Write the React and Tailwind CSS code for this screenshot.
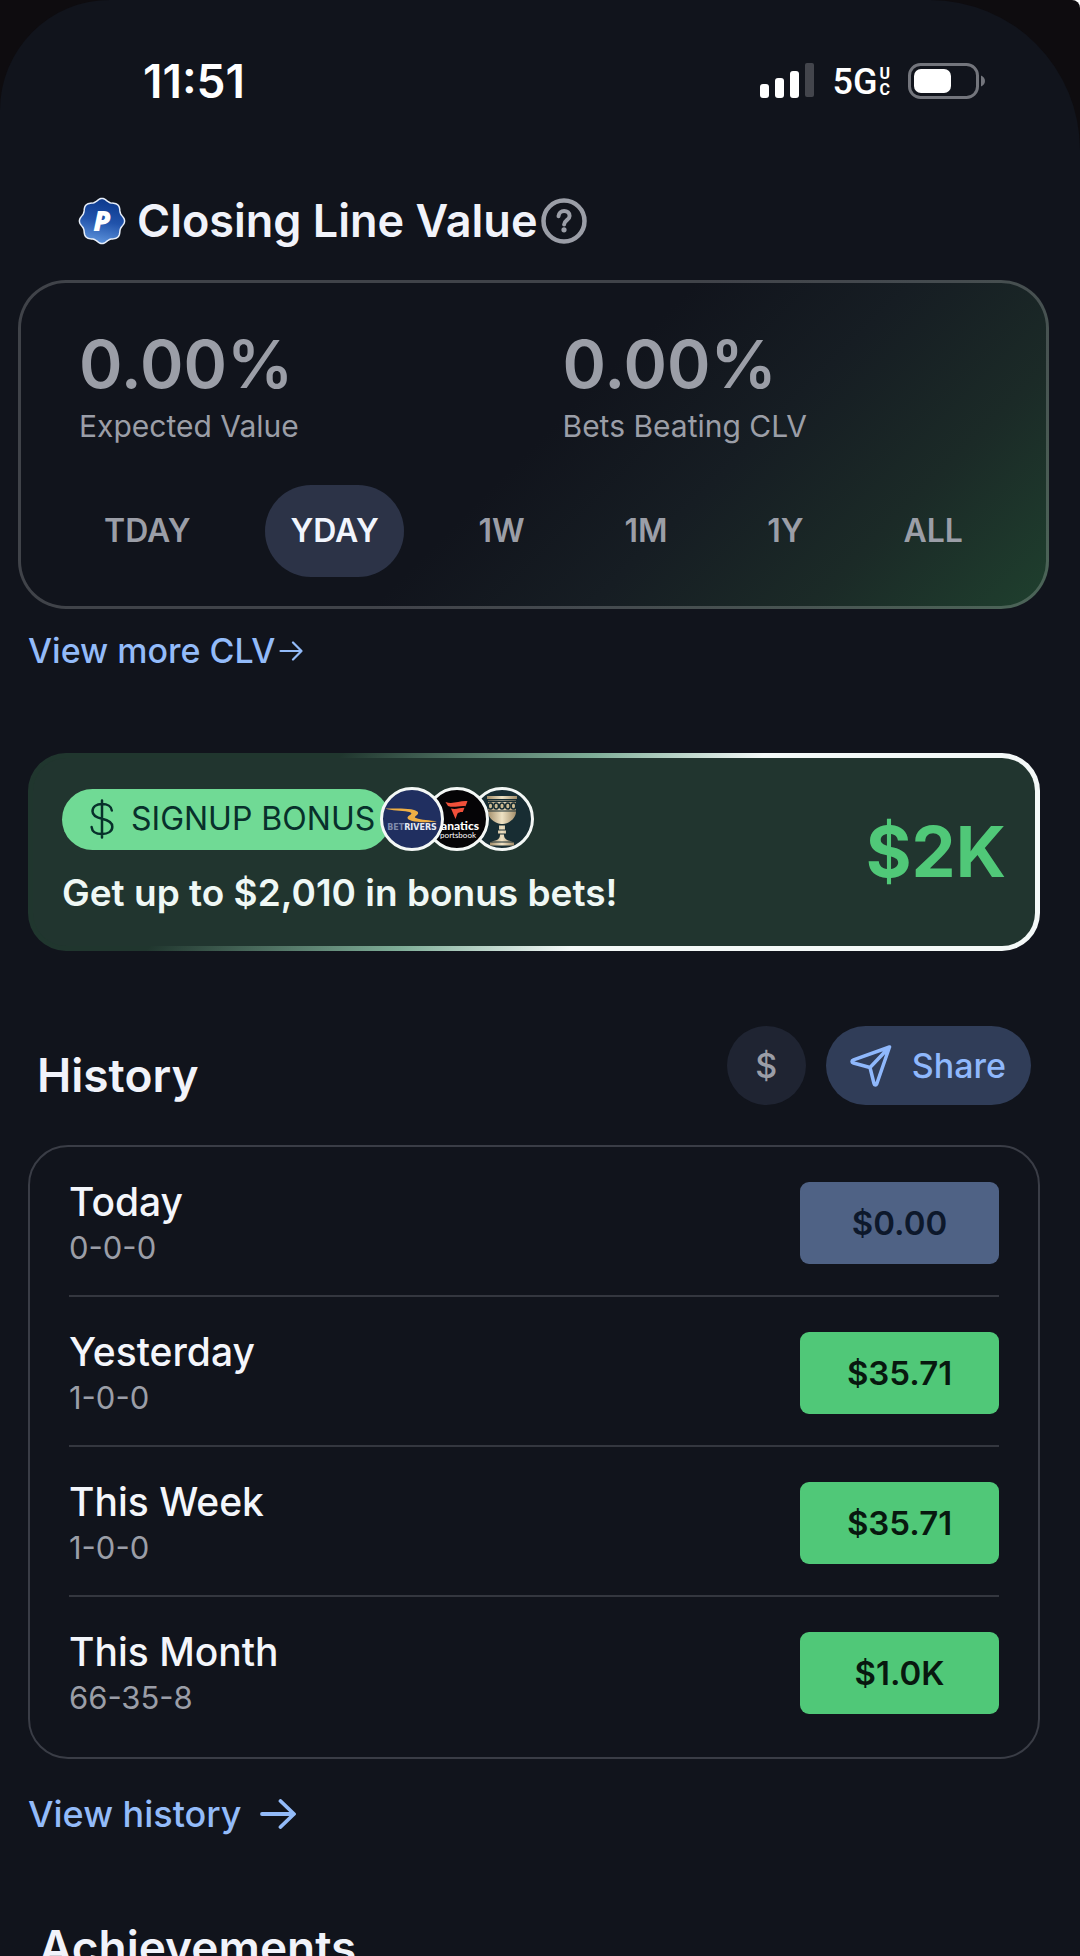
import React from "react";

const PERIODS = ["TDAY", "YDAY", "1W", "1M", "1Y", "ALL"];

const HISTORY = [
  { name: "Today", record: "0-0-0", amount: "$0.00", flat: true },
  { name: "Yesterday", record: "1-0-0", amount: "$35.71" },
  { name: "This Week", record: "1-0-0", amount: "$35.71" },
  { name: "This Month", record: "66-35-8", amount: "$1.0K" },
];

// Outline of the scalloped badge: a circle whose radius swells eight times.
const SCALLOP =
  Array.from({ length: 120 }, (_, i) => {
    const a = (i / 120) * Math.PI * 2;
    const r = 21.3 + 1.3 * Math.cos(8 * a);
    return `${i ? "L" : "M"}${(24 + r * Math.cos(a)).toFixed(2)} ${(24 + r * Math.sin(a)).toFixed(2)}`;
  }).join("") + "Z";

function StatusBar() {
  return (
    <header className="flex items-center justify-between pt-[57px] pr-[94px] pl-[143px] text-white">
      <time className="text-[46px] leading-[48px] font-semibold">11:51</time>
      <div className="flex items-center">
        <svg className="h-9 w-[54px]" viewBox="0 0 54 36" aria-label="Signal" role="img">
          <rect x="0" y="21" width="9" height="14" rx="3" fill="#fff" />
          <rect x="15" y="15" width="9" height="20" rx="3" fill="#fff" />
          <rect x="30" y="8" width="9" height="27" rx="3" fill="#fff" />
          <rect x="45" y="0" width="9" height="34" rx="2" fill="#43454c" />
        </svg>
        <span className="ml-[18px] pt-[2px] font-[Roboto] text-[36px] leading-10 font-medium">5G</span>
        <span className="ml-[2px] flex flex-col pt-[2px] font-[Roboto] text-[16px] leading-4 font-bold">
          <span>U</span>
          <span>C</span>
        </span>
        <svg className="ml-[18px] h-9 w-[78px]" viewBox="0 0 78 36" aria-label="Battery" role="img">
          <rect x="1.500" y="1.500" width="68" height="33" rx="11" fill="none" stroke="#73757c" strokeWidth="3" />
          <rect x="6" y="6" width="37" height="24" rx="7" fill="#fff" />
          <path d="M73 12.500c2.500 1 4 3 4 5.500s-1.500 4.500-4 5.500z" fill="#73757c" />
        </svg>
      </div>
    </header>
  );
}

function ClvBadge() {
  return (
    <svg className="size-12 shrink-0" viewBox="0 0 48 48" aria-hidden="true">
      <defs>
        <linearGradient id="badge" x1="0.6" y1="0" x2="0.4" y2="1">
          <stop offset="0" stopColor="#0b388c" />
          <stop offset="0.5" stopColor="#2153ab" />
          <stop offset="1" stopColor="#5f95dd" />
        </linearGradient>
      </defs>
      <path d={SCALLOP} fill="url(#badge)" stroke="#e8effa" strokeWidth="1.500" />
      <text x="24" y="34" textAnchor="middle" fill="#fff" fontFamily="Open Sans, sans-serif" fontSize="28" fontWeight="800" fontStyle="italic">
        P
      </text>
    </svg>
  );
}

function Stat({ value, label }) {
  return (
    <div className="flex-1">
      <div className="text-[66px] leading-[72px] font-semibold">{value}</div>
      <div className="mt-[6px] text-[30px] leading-10">{label}</div>
    </div>
  );
}

function ClvCard() {
  return (
    <section className="mr-[31px] ml-[18px] rounded-[48px] border-[3px] border-white/20 bg-[linear-gradient(135deg,#11141c_50%,#161d23_66%,#1b2a27_82%,#1f402e_100%)] bg-origin-border px-[58px] pt-[45px] pb-[29px] text-[#9b9ea7]">
      <div className="-mr-[58px] flex">
        <Stat value="0.00%" label="Expected Value" />
        <Stat value="0.00%" label="Bets Beating CLV" />
      </div>
      <div className="mt-[39px] flex justify-between">
        {PERIODS.map((p) => (
          <button
            key={p}
            type="button"
            aria-pressed={p === "YDAY"}
            className={
              "h-[92px] rounded-[46px] px-[25px] text-[32px] leading-10 font-semibold " +
              (p === "YDAY" ? "bg-[#2c3347] text-[#f1f5fd]" : "")
            }
          >
            {p}
          </button>
        ))}
      </div>
    </section>
  );
}

function DollarIcon() {
  return (
    <svg className="h-10 w-6" viewBox="0 0 24 40" fill="none" stroke="#08302b" strokeWidth="2.500" strokeLinecap="round" aria-hidden="true">
      <path d="M12 1.500v37M21.800 11.500C21.500 7.500 17.500 5 12 5S2.500 7.800 2.500 12.300C2.500 17 6.500 18.600 12 19.800s10.300 3 10.300 7.900c0 4.600-4.300 7.300-10.300 7.300S2 32.500 1.600 28" />
    </svg>
  );
}

function BetRivers() {
  return (
    <svg className="relative z-20 size-16" viewBox="0 0 64 64" role="img" aria-label="BetRivers">
      <circle cx="32" cy="32" r="30.500" fill="#202f60" stroke="#f4f8f6" strokeWidth="3" />
      <path d="M5 21.500c10 0 19-.5 26 .8 6 1.200 9 3.200 6 5.600-2 1.600-3 2.300-1 3.100 5 2 14 2.200 21 3.500-9 1-19 1-25.500-.8-5-1.500-5-3.600-1.500-5.700 2.500-1.600 1.500-2.700-2-3.300-7-1.300-16-1-23-3.200z" fill="#efaf45" />
      <text x="32" y="43" textAnchor="middle" fontFamily="DejaVu Sans, sans-serif" fontSize="8" fontWeight="700">
        <tspan fill="#7f8aac">BET</tspan>
        <tspan fill="#e6eaf4">RIVERS</tspan>
      </text>
    </svg>
  );
}

function Fanatics() {
  return (
    <svg className="relative z-10 -ml-[19px] size-16" viewBox="0 0 64 64" role="img" aria-label="Fanatics Sportsbook">
      <circle cx="32" cy="32" r="30.500" fill="#050406" stroke="#f4f8f6" strokeWidth="3" />
      <path d="M20.500 15c7 3 14-1.500 22-.8l-2 5c-6-.8-12 2-17.500-.2zM26 21.500c5 1.500 9-1 13.500-.7l-1.700 4.300c-2.300-.2-4 .4-5.300 1.300L30.500 32z" fill="#f0503a" />
      <text x="54" y="43" textAnchor="end" fontFamily="Lato, sans-serif" fontSize="12" fontWeight="900" fill="#fff">anatics</text>
      <text x="51" y="51" textAnchor="end" fontFamily="Lato, sans-serif" fontSize="8" fill="#fff">portsbook</text>
    </svg>
  );
}

function Trophy() {
  return (
    <svg className="-ml-[19px] size-16" viewBox="0 0 64 64" aria-hidden="true">
      <defs>
        <linearGradient id="cup" x1="0" x2="1">
          <stop offset="0" stopColor="#a08a66" />
          <stop offset="0.5" stopColor="#efe2c4" />
          <stop offset="1" stopColor="#a08a66" />
        </linearGradient>
      </defs>
      <circle cx="32" cy="32" r="30.500" fill="#182d33" stroke="#f4f8f6" strokeWidth="3" />
      <g fill="url(#cup)">
        <path d="M17 9h30v3H17zM18 13.500h28v11C46 31 40 36 33 37h-2c-7-1-13-6-13-12.500z" />
        <path d="M29 38.500h6v4h-6zM28 43.500h8v3h-8zM30 47.500h4c0 4 2 6 9 7H21c7-1 9-3 9-7zM20 55.500h24v3H20z" />
      </g>
      <g fill="#cdbb93" stroke="#182d33" strokeWidth="1.500">
        {[20.500, 26.200, 32, 37.800, 43.500].map((x) => (
          <ellipse key={x} cx={x} cy="19" rx="2.300" ry="3" />
        ))}
      </g>
      <path d="M17 14.500h30M18 24h28" stroke="#182d33" strokeWidth="1" />
    </svg>
  );
}

function BonusBanner() {
  return (
    <a
      href="#bonus"
      className="mt-20 mr-10 ml-7 block rounded-[38px] bg-[linear-gradient(135deg,#20362e_26%,#7fae98_47%,#f4f9f8_61%)] p-[5px]"
    >
      <div className="flex items-center justify-between rounded-[33px] bg-[#21352f] pt-[29px] pr-[29px] pb-[29px] pl-[29px]">
        <div>
          <div className="flex h-16 items-center">
            <span className="flex h-[61px] items-center gap-[17px] rounded-full bg-[#70da95] pr-[15px] pl-7 text-[32px] leading-10 text-[#08302b]">
              <DollarIcon />
              SIGNUP BONUS
            </span>
            <span className="-ml-[10px] flex">
              <BetRivers />
              <Fanatics />
              <Trophy />
            </span>
          </div>
          <p className="mt-[18px] text-[37px] leading-[48px] font-semibold text-[#eff8f5]">Get up to $2,010 in bonus bets!</p>
        </div>
        <strong className="text-[70px] leading-[72px] font-bold text-[#50c878]">$2K</strong>
      </div>
    </a>
  );
}

function PaperPlane() {
  return (
    <svg className="size-[42px]" viewBox="0 0 42 42" fill="none" stroke="currentColor" strokeWidth="3.500" strokeLinejoin="round" strokeLinecap="round" aria-hidden="true">
      <path d="M39.500 2 3.500 14.800c-2 .7-2 2.500 0 3.200L20 22.500l4 16c.5 2 2 2 2.800.2zL20 22.500" />
    </svg>
  );
}

function History() {
  return (
    <section className="mr-10 ml-7">
      <div className="mt-[75px] flex items-end justify-between pr-[9px] pl-[9px]">
        <h2 className="text-[46px] leading-[60px] font-semibold text-[#f1f3fa]">History</h2>
        <div className="flex gap-5">
          <button type="button" aria-label="Show dollars" className="size-[79px] rounded-full bg-[#1f2432] text-[34px] leading-10 font-medium text-[#9b9ea7]">
            $
          </button>
          <button type="button" className="flex h-[79px] items-center gap-5 rounded-full bg-[#303d58] pr-[25px] pl-6 text-[34px] leading-10 font-medium text-[#8fb8fc]">
            <PaperPlane />
            Share
          </button>
        </div>
      </div>
      <ul className="mt-10 rounded-[40px] border-2 border-[#3a3d46] px-[39px] pb-3">
        {HISTORY.map((h) => (
          <li key={h.name} className="flex items-center justify-between border-b-2 border-[#34373f] pt-[30px] pb-[27px] last:border-b-0">
            <div>
              <div className="text-[39px] leading-[50px] font-medium text-[#f4f6fb]">{h.name}</div>
              <div className="text-[31px] leading-[41px] text-[#9b9ea7]">{h.record}</div>
            </div>
            <span
              className={
                "w-[199px] rounded-[9px] text-center text-[33px] leading-[82px] font-semibold " +
                (h.flat ? "bg-[#4f6285] text-[#0d182b]" : "bg-[#50c878] text-[#08180f]")
              }
            >
              {h.amount}
            </span>
          </li>
        ))}
      </ul>
    </section>
  );
}

export default function App() {
  return (
    <div className="h-screen overflow-hidden bg-white font-[Inter,sans-serif]">
      <div className="h-full rounded-tr-[8px] bg-[#0e0c0f]">
        <main className="h-full overflow-hidden rounded-tl-[110px] rounded-tr-[150px] bg-[#11141c]">
          <StatusBar />
          <div className="mt-[88px] mb-[31px] flex items-center pl-[78px]">
            <ClvBadge />
            <h1 className="ml-[11px] text-[45px] leading-[56px] font-semibold text-[#f1f3fa]">Closing Line Value</h1>
            <button type="button" aria-label="About closing line value" className="ml-[3px]">
              <svg className="size-[46px]" viewBox="0 0 46 46" fill="none" stroke="#9b9ea7" aria-hidden="true">
                <circle cx="23" cy="23" r="20.500" strokeWidth="4.500" />
                <path d="M17.500 18.200c.3-3.200 2.600-5.200 5.600-5.200 3.200 0 5.500 2 5.500 4.900 0 4.200-5.500 4.300-5.500 8.600" strokeWidth="4" strokeLinecap="round" />
                <circle cx="23" cy="31.800" r="2.600" fill="#9b9ea7" stroke="none" />
              </svg>
            </button>
          </div>
          <ClvCard />
          <a href="#clv" className="mt-5 ml-7 flex w-fit items-center gap-1 text-[34px] leading-[44px] font-medium text-[#93bbf9]">
            View more CLV
            <svg className="h-5 w-6" viewBox="0 0 24 20" fill="none" stroke="currentColor" strokeWidth="2.200" strokeLinecap="round" strokeLinejoin="round" aria-hidden="true">
              <path d="M1.500 10h21M14 1.500l8.500 8.500-8.500 8.500" />
            </svg>
          </a>
          <BonusBanner />
          <History />
          <a href="#history" className="mt-[31px] ml-7 flex w-fit items-center gap-[18px] text-[36px] leading-[48px] font-medium text-[#93bbf9]">
            View history
            <svg className="h-[30px] w-9" viewBox="0 0 36 30" fill="none" stroke="currentColor" strokeWidth="3.800" strokeLinecap="round" strokeLinejoin="round" aria-hidden="true">
              <path d="M2 15h31.500M20.500 2l13.500 13-13.500 13" />
            </svg>
          </a>
          <h2 className="mt-[79px] pl-[39px] text-[46px] leading-[60px] font-semibold text-[#f1f3fa]">Achievements</h2>
        </main>
      </div>
    </div>
  );
}
